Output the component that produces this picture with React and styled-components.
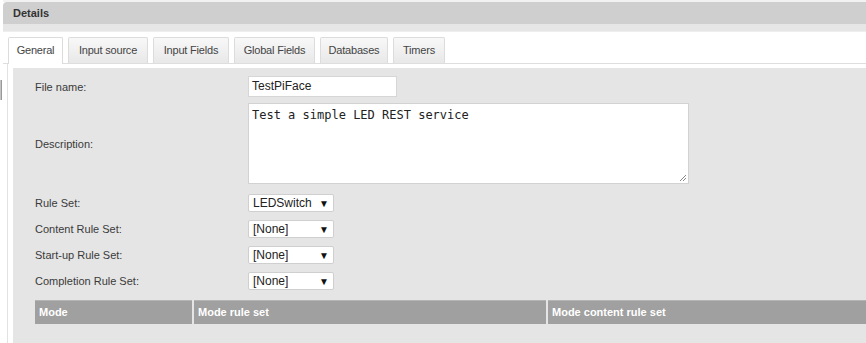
import React from "react";
import styled, { createGlobalStyle } from "styled-components";

const GlobalStyle = createGlobalStyle`
    html, body {
        margin: 0;
        padding: 0;
        background: #fff;
        overflow: hidden;
        font-family: "Liberation Sans", Arial, sans-serif;
    }
`

const Page = styled.div`
    display: flex;
    width: 920px;
    height: 343px;
    background: #fff;
`

const Gutter = styled.div`
    width: 3px;
    flex: none;
    .handle{
        margin-top: 80px;
        width: 2px;
        height: 20px;
        background: #c4c4c4;
        border-right: 1px solid #999;
        box-sizing: border-box;
    }
`

const Details = styled.div`
    flex: 1;
    display: flex;
    flex-direction: column;
    padding-top: 2px;
    background: linear-gradient(#f2f2f2 0, #f2f2f2 2px, #fff 2px);
`

const Header = styled.div`
    height: 22px;
    line-height: 22px;
    background: #cfcfcf;
    border-top-left-radius: 4px;
    padding-left: 10px;
    font-size: 11px;
    font-weight: bold;
    color: #333;
`

const HeaderBand = styled.div`
    height: 7px;
    background: #e6e6e6;
    border-bottom: 1px solid #eeeeee;
`

const TabStrip = styled.div`
    display: flex;
    gap: 5px;
    padding: 5px 0 0 5px;
    border-bottom: 1px solid #dedede;
    height: 26px;
`

const Tab = styled.div`
    width: ${p => p.width}px;
    height: 26px;
    box-sizing: border-box;
    text-align: center;
    line-height: 25px;
    font-size: 11px;
    letter-spacing: -0.2px;
    color: #444;
    white-space: nowrap;
    border: 1px solid #dcdcdc;
    border-bottom: none;
    border-radius: 2px 2px 0 0;
    background: ${p => p.active ? "#fff" : "linear-gradient(#f8f8f8, #e8e8e8)"};
    ${p => p.active && "height: 27px; margin-bottom: -1px;"}
`

const TabBody = styled.div`
    flex: 1;
    margin-left: 4px;
    border-left: 1px solid #e2e2e2;
    padding: 4px 0 0 5px;
`

const Panel = styled.div`
    background: #e5e5e5;
    height: 100%;
    padding: 8px 0 0 22px;
    box-sizing: border-box;
`

const Form = styled.div`
    display: grid;
    grid-template-columns: 213px auto;
    align-items: center;
    justify-items: start;
    .label{
        font-size: 11px;
        color: #3a3a3a;
    }
`

const Row = styled.div`
    display: contents;
`

const Cell = styled.div`
    margin-top: ${p => p.gap || 0}px;
`

const TextInput = styled.div`
    width: 149px;
    height: 21px;
    box-sizing: border-box;
    background: #fff;
    border: 1px solid #d6d6d6;
    padding: 0 3px;
    line-height: 19px;
    font-size: 12px;
    color: #222;
`

const TextArea = styled.div`
    position: relative;
    width: 441px;
    height: 81px;
    box-sizing: border-box;
    background: #fff;
    border: 1px solid #d2d2d2;
    padding: 4px 3px;
    font-family: "DejaVu Sans Mono", monospace;
    font-size: 12px;
    color: #222;
    .grip{
        position: absolute;
        right: 1px;
        bottom: 1px;
    }
`

const Select = styled.div`
    width: 86px;
    height: 18px;
    box-sizing: border-box;
    background: #fff;
    border: 1px solid #cfcfcf;
    border-radius: 2px;
    display: flex;
    align-items: center;
    justify-content: space-between;
    padding: 0 4px 0 4px;
    font-size: 12px;
    color: #222;
    .arrow{
        font-size: 10px;
        color: #111;
    }
`

const ModeTable = styled.div`
    display: flex;
    gap: 2px;
    margin-top: 10px;
    .col{
        height: 24px;
        box-sizing: border-box;
        background: #a0a0a0;
        border-top: 1px solid #b4b4b4;
        line-height: 22px;
        padding-left: 4px;
        font-size: 11px;
        font-weight: bold;
        color: #fff;
        flex: none;
    }
`

const fields = [
    { label: "Rule Set:", value: "LEDSwitch", gap: 10 },
    { label: "Content Rule Set:", value: "[None]", gap: 8 },
    { label: "Start-up Rule Set:", value: "[None]", gap: 8 },
    { label: "Completion Rule Set:", value: "[None]", gap: 8 },
];

const tabs = [
    { name: "General", width: 55 },
    { name: "Input source", width: 80 },
    { name: "Input Fields", width: 76 },
    { name: "Global Fields", width: 81 },
    { name: "Databases", width: 68 },
    { name: "Timers", width: 52 },
];

export default function App() {
    return <>
        <GlobalStyle />
        <Page>
            <Gutter><div className="handle" /></Gutter>
            <Details>
                <Header>Details</Header>
                <HeaderBand />
                <TabStrip>
                    {tabs.map((t, i) => <Tab key={t.name} width={t.width} active={i === 0}>{t.name}</Tab>)}
                </TabStrip>
                <TabBody>
                    <Panel>
                        <Form>
                            <Row>
                                <Cell className="label">File name:</Cell>
                                <Cell><TextInput>TestPiFace</TextInput></Cell>
                            </Row>
                            <Row>
                                <Cell className="label" gap={6}>Description:</Cell>
                                <Cell gap={6}>
                                    <TextArea>
                                        Test a simple LED REST service
                                        <svg className="grip" width="8" height="8" viewBox="0 0 8 8">
                                            <path d="M7 1L1 7M7 4L4 7" stroke="#888" strokeWidth="1" />
                                        </svg>
                                    </TextArea>
                                </Cell>
                            </Row>
                            {fields.map(f => <Row key={f.label}>
                                <Cell className="label" gap={f.gap}>{f.label}</Cell>
                                <Cell gap={f.gap}>
                                    <Select>{f.value}<span className="arrow">▼</span></Select>
                                </Cell>
                            </Row>)}
                        </Form>
                        <ModeTable>
                            <div className="col" style={{ width: 157 }}>Mode</div>
                            <div className="col" style={{ width: 352 }}>Mode rule set</div>
                            <div className="col" style={{ width: 352 }}>Mode content rule set</div>
                        </ModeTable>
                    </Panel>
                </TabBody>
            </Details>
        </Page>
    </>
}
